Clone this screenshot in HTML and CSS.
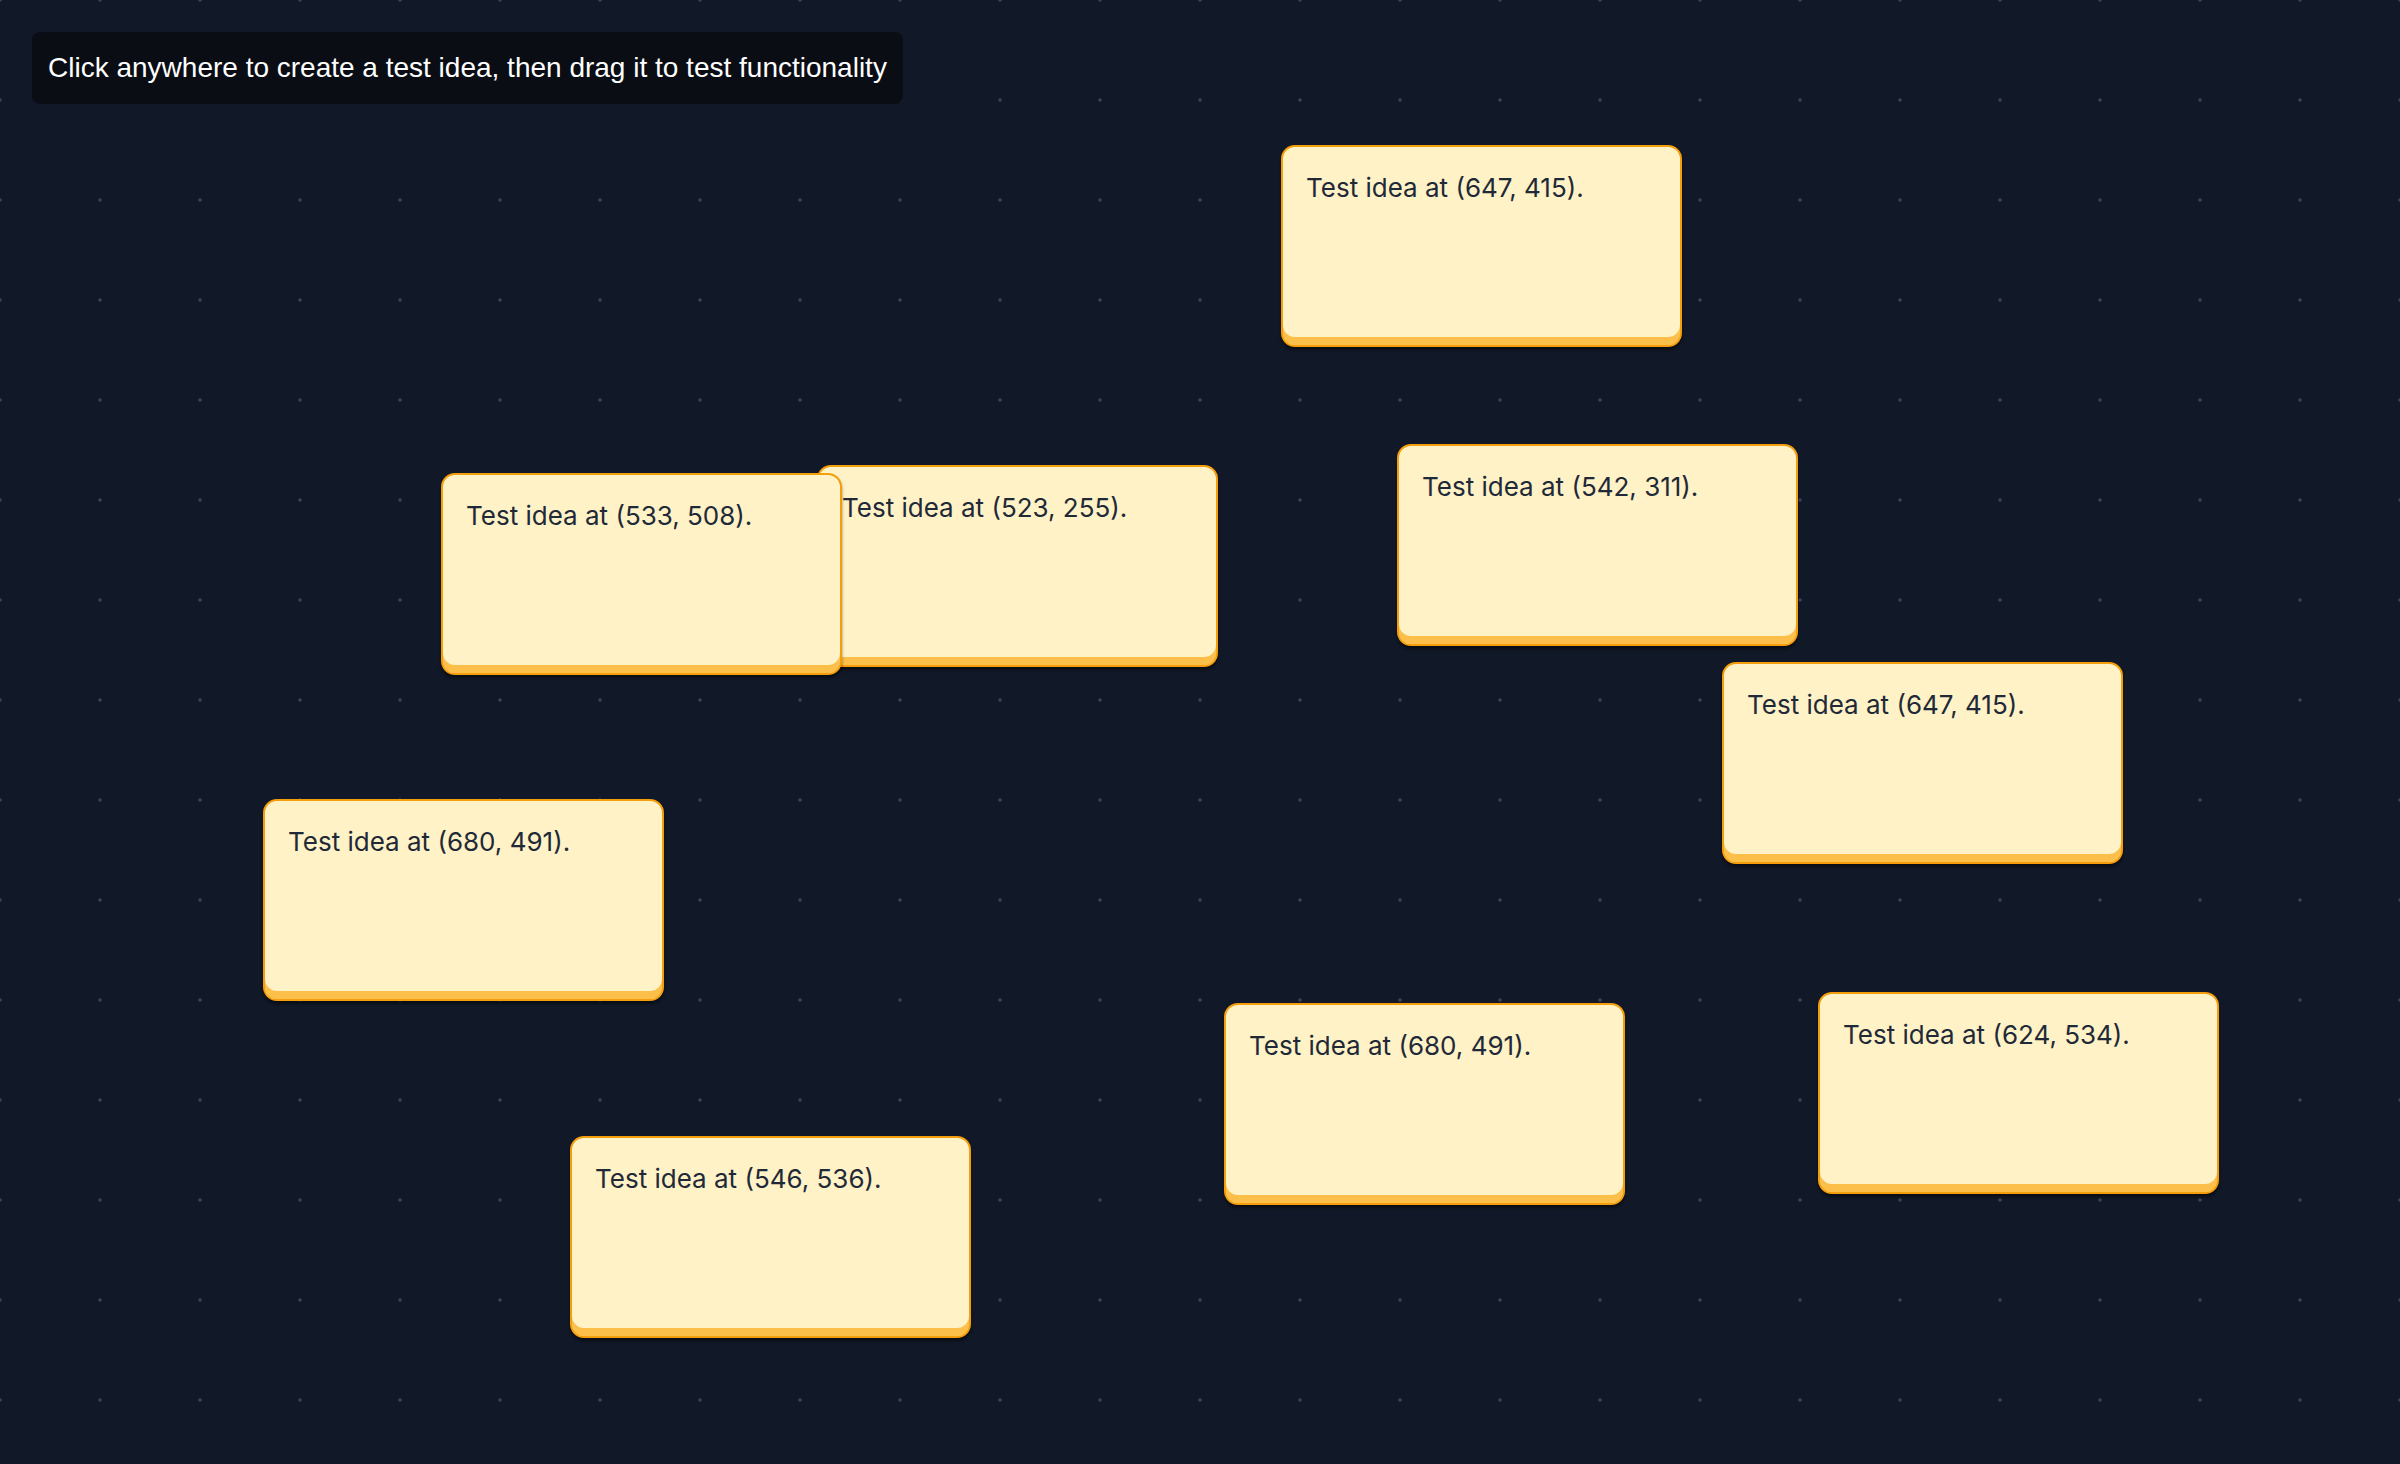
FILE: index.html
```html
<!DOCTYPE html>
<html>
<head>
<meta charset="utf-8">
<link rel="stylesheet" href="styles.css">
</head>
<body>
<main class="board">
  <div class="hint">Click anywhere to create a test idea, then drag it to test functionality</div>
  <div class="idea" style="left:1281px;top:145px">Test idea at (647, 415).</div>
  <div class="idea" style="left:817px;top:465px">Test idea at (523, 255).</div>
  <div class="idea" style="left:441px;top:473px">Test idea at (533, 508).</div>
  <div class="idea" style="left:1397px;top:444px">Test idea at (542, 311).</div>
  <div class="idea" style="left:1722px;top:662px">Test idea at (647, 415).</div>
  <div class="idea" style="left:263px;top:799px">Test idea at (680, 491).</div>
  <div class="idea" style="left:1224px;top:1003px">Test idea at (680, 491).</div>
  <div class="idea" style="left:1818px;top:992px">Test idea at (624, 534).</div>
  <div class="idea" style="left:570px;top:1136px">Test idea at (546, 536).</div>
</main>
</body>
</html>
```
FILE: styles.css
```css
html, body {
  margin: 0;
  padding: 0;
  height: 100%;
  background: #111827;
  overflow: hidden;
}
.board {
  position: relative;
  width: 100%;
  height: 100%;
  background-color: #111827;
  background-image: radial-gradient(circle, #3a4252 1.4px, transparent 2px);
  background-size: 100px 100px;
  background-position: -50px -50px;
}
.hint {
  position: absolute;
  left: 32px;
  top: 32px;
  height: 72px;
  box-sizing: border-box;
  display: flex;
  align-items: center;
  padding: 0 16px;
  background: #0a0d14;
  border-radius: 8px;
  color: #ffffff;
  font-family: "Liberation Sans", Arial, sans-serif;
  font-size: 28px;
  white-space: nowrap;
}
.idea {
  position: absolute;
  width: 401px;
  height: 202px;
  box-sizing: border-box;
  padding: 21px 23px;
  background: #fef2c6;
  border: 2px solid #f59e0b;
  border-radius: 14px;
  box-shadow: inset 0 -8px 0 #fbbf4a, 0 3px 3px rgba(0, 0, 0, 0.45);
  color: #1f2937;
  font-family: Inter, "Noto Sans", sans-serif;
  font-size: 26px;
  line-height: 39px;
  white-space: nowrap;
}
```
